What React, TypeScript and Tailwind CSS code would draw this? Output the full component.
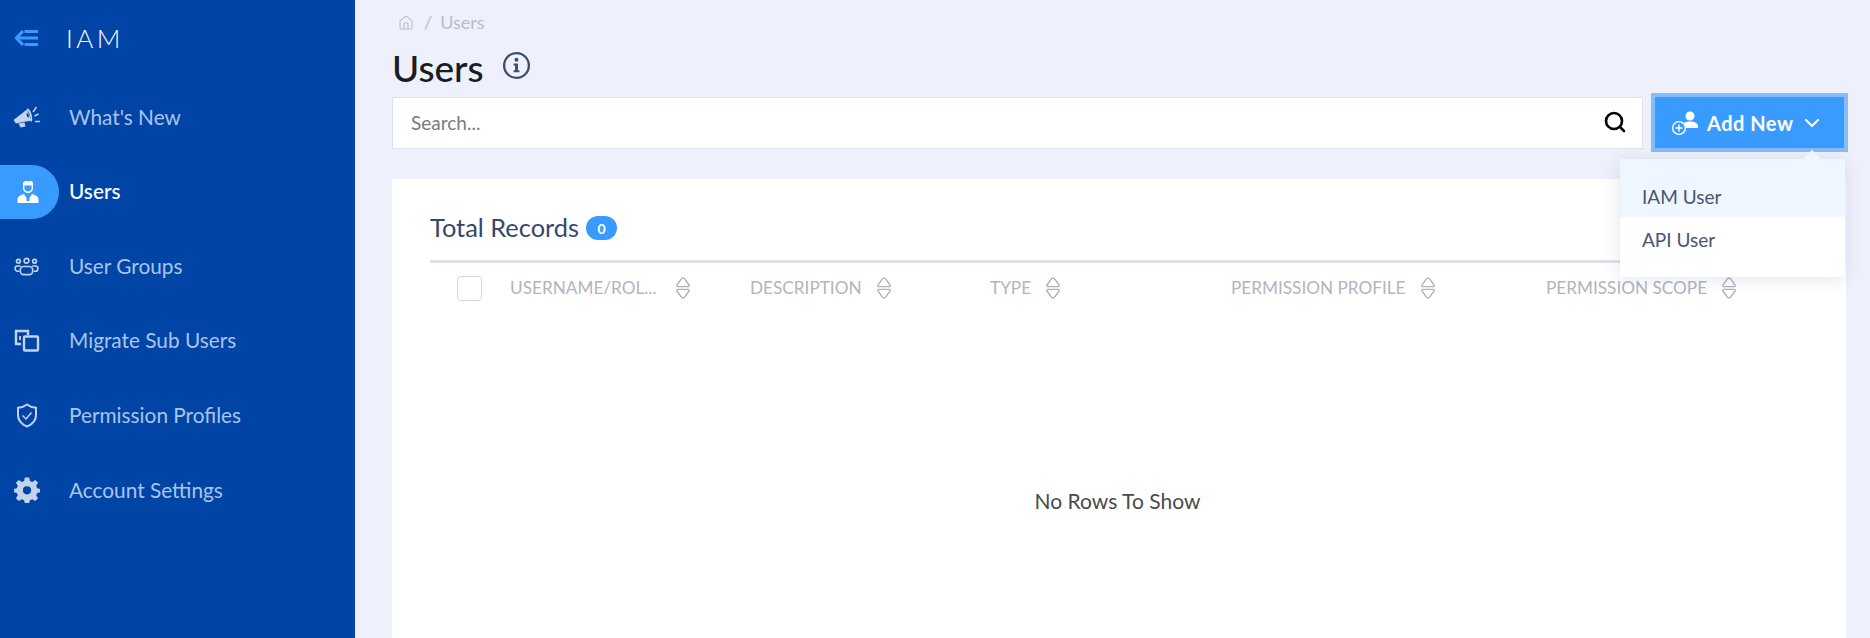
import { ChevronDown, House, Search } from "lucide-react";
import type { ReactNode } from "react";

function Megaphone() {
  return (
    <svg viewBox="0 0 28 22" className="w-[28px] h-[22px]" fill="currentColor">
      <path d="M0.5 14 L14 3.5 L18.5 14.5 L3 17.5 Z" />
      <path d="M14 2.5 C16.5 1.5 20.5 10 19 15.5 L17.5 15.5 C18.5 11 15.5 4.5 14 4 Z" />
      <path d="M14.3 7 C12.8 7.6 13.8 11.5 15.8 11.6 C16.4 10.4 15.4 7.6 14.3 7 Z" fill="#0045a5" />
      <path d="M5.5 17.5 L11.5 16.5 L12.5 20.5 L7.5 21.5 Z" />
      <path d="M20 6 L23.5 1 M21.5 10 L25.5 8 M22 15.5 L27 15.5" fill="none" stroke="currentColor" strokeWidth="1.4" />
    </svg>
  );
}

function UserTie() {
  return (
    <svg viewBox="0 0 22 24" className="w-[22px] h-[24px]" fill="white">
      <path d="M6 4 C6 1 9 0.5 11 1.5 C13 0.5 16 0.5 16 3 L16 8 C16 11 13.5 13 11 13 C8.5 13 6 11 6 8 Z" />
      <path d="M7.4 5.6 L14.6 5.6 L14.6 8 C14.6 10 13 11.6 11 11.6 C9 11.6 7.4 10 7.4 8 Z" fill="#3a9bff" />
      <path d="M0.5 23 L0.5 19.5 C0.5 16.5 3.5 15 7 14 L9.5 18 L9.5 21 L12.5 21 L12.5 18 L15 14 C18.5 15 21.5 16.5 21.5 19.5 L21.5 23 Z" />
    </svg>
  );
}

function Group() {
  return (
    <svg viewBox="0 0 26 20" className="w-[25px] h-[19px]" fill="none" stroke="currentColor" strokeWidth="1.7">
      <circle cx="13" cy="4" r="2.5" />
      <circle cx="4.5" cy="4.5" r="2" />
      <circle cx="21.5" cy="4.5" r="2" />
      <rect x="6.5" y="10" width="13" height="8.5" rx="3.5" />
      <path d="M5.5 15 L3.5 15 C2 15 1 13.5 1 12 C1 10.5 2 9.5 3.5 9.5 L7 9.5" />
      <path d="M20.5 15 L22.5 15 C24 15 25 13.5 25 12 C25 10.5 24 9.5 22.5 9.5 L19 9.5" />
    </svg>
  );
}

function Migrate() {
  return (
    <svg viewBox="0 0 26 24" className="w-[26px] h-[24px]" fill="none" stroke="currentColor" strokeWidth="2.4">
      <path d="M7 15 L2 15 L2 2 L14 2 L14 6" />
      <path d="M6 7 L6 11" strokeWidth="1.8" />
      <rect x="10" y="7.5" width="14" height="14" rx="1" />
    </svg>
  );
}

function Shield() {
  return (
    <svg viewBox="0 0 22 25" className="w-[22px] h-[25px]" fill="none" stroke="currentColor" strokeWidth="2">
      <path d="M11 1.5 C13.5 3.5 16.5 4.5 20 4.8 L20 12 C20 17.5 16 21.5 11 23.5 C6 21.5 2 17.5 2 12 L2 4.8 C5.5 4.5 8.5 3.5 11 1.5 Z" />
      <path d="M6.5 12.5 L10 16 L15.5 9.5" strokeWidth="1.5" />
    </svg>
  );
}

function Gear() {
  return (
    <svg viewBox="0 0 24 24" className="w-[26px] h-[26px]" fill="currentColor">
      <path
        fillRule="evenodd"
        d="M10 0.5 H14 L14.7 3.6 L16.9 4.5 L19.6 2.8 L22.2 5.4 L20.5 8.1 L21.4 10.3 L24 11 V14 L21.4 14.7 L20.5 16.9 L22.2 19.6 L19.6 22.2 L16.9 20.5 L14.7 21.4 L14 24 H10 L9.3 21.4 L7.1 20.5 L4.4 22.2 L1.8 19.6 L3.5 16.9 L2.6 14.7 L0 14 V11 L2.6 10.3 L3.5 8.1 L1.8 5.4 L4.4 2.8 L7.1 4.5 L9.3 3.6 Z M12 8.5 A3.8 3.8 0 1 0 12 16.1 A3.8 3.8 0 1 0 12 8.5 Z"
      />
    </svg>
  );
}

function AddUser() {
  return (
    <svg viewBox="0 0 28 26" className="w-[28px] h-[26px]" fill="white">
      <circle cx="19" cy="6" r="4.5" />
      <path d="M11 18 C11 13.5 14 11.5 19 11.5 C24 11.5 27 13.5 27 16.5 L27 18 Z" />
      <circle cx="8" cy="18" r="6.4" fill="#3a9bff" stroke="white" strokeWidth="1.4" />
      <path d="M8 14.5 V21.5 M4.5 18 H11.5" stroke="white" strokeWidth="1.4" />
    </svg>
  );
}

function SortIcon() {
  return (
    <svg viewBox="0 0 16 22" className="w-[16px] h-[22px] shrink-0" fill="none" stroke="#afb3bc" strokeWidth="1.4" strokeLinejoin="round">
      <path d="M8 1 C9 1 9.5 1.6 10 2.4 L14 8 C14.4 8.8 14 9.6 13 9.6 L3 9.6 C2 9.6 1.6 8.8 2 8 L6 2.4 C6.5 1.6 7 1 8 1 Z" />
      <path d="M8 21 C9 21 9.5 20.4 10 19.6 L14 14 C14.4 13.2 14 12.4 13 12.4 L3 12.4 C2 12.4 1.6 13.2 2 14 L6 19.6 C6.5 20.4 7 21 8 21 Z" />
    </svg>
  );
}

function InfoIcon() {
  return (
    <svg viewBox="0 0 30 30" className="w-[29px] h-[29px]" fill="none">
      <circle cx="15" cy="15" r="12.8" stroke="#3d4c72" strokeWidth="2.4" />
      <circle cx="15" cy="9" r="2" fill="#3d4c72" />
      <path d="M12 13 H16.5 V20 H18 V22 H12 V20 H13.5 V15 H12 Z" fill="#3d4c72" />
    </svg>
  );
}

const navItems: { label: string; icon: ReactNode; active?: boolean }[] = [
  { label: "What's New", icon: <Megaphone /> },
  { label: "Users", icon: <UserTie />, active: true },
  { label: "User Groups", icon: <Group /> },
  { label: "Migrate Sub Users", icon: <Migrate /> },
  { label: "Permission Profiles", icon: <Shield /> },
  { label: "Account Settings", icon: <Gear /> },
];

const columns = [
  { label: "USERNAME/ROL...", width: "w-[240px]", labelWidth: "w-[151px]" },
  { label: "DESCRIPTION", width: "w-[240px]", labelWidth: "" },
  { label: "TYPE", width: "w-[241px]", labelWidth: "" },
  { label: "PERMISSION PROFILE", width: "w-[315px]", labelWidth: "" },
  { label: "PERMISSION SCOPE", width: "w-[200px]", labelWidth: "" },
];

function Sidebar() {
  return (
    <aside className="w-[355px] shrink-0 h-full bg-[#0045a5] flex flex-col">
      <div className="h-[75px] flex items-center pl-[14px] shrink-0">
        <svg viewBox="0 0 24 18" className="w-[24px] h-[18px]" fill="none" stroke="#3a9bff" strokeWidth="3.2">
          <path d="M9 2 L2.5 9 L9 16" />
          <path d="M3 9 H24 M10.5 2.5 H24 M10.5 15.5 H24" />
        </svg>
        <span className="ml-[28px] text-[26px] font-light text-white tracking-[3.5px] leading-none">IAM</span>
      </div>
      <nav className="flex flex-col pt-[5px]">
        {navItems.map((item) => (
          <div key={item.label} className="h-[74.6px] flex items-center">
            <div
              className={`w-[59px] h-[54px] flex items-center justify-center rounded-r-[27px] shrink-0 ${
                item.active ? "bg-[#3a9bff] pr-[4px]" : "text-[#c3d3ee] pr-[6px]"
              }`}
            >
              {item.icon}
            </div>
            <span className={`ml-[10px] pb-[2px] text-[20.8px] ${item.active ? "text-white font-medium" : "text-[#a9c4ec]"}`}>
              {item.label}
            </span>
          </div>
        ))}
      </nav>
    </aside>
  );
}

function AddNewMenu() {
  return (
    <div className="absolute z-10 right-[3px] top-[66px] w-[225px] bg-white shadow-[0_2px_16px_rgba(60,70,110,0.14)]">
      <div className="absolute -top-[9px] right-[24px] w-0 h-0 border-x-[9px] border-x-transparent border-b-[9px] border-b-[#eef6ff]" />
      <div className="h-[58px] pt-[19px] flex items-center px-[22px] bg-[#eef6ff] text-[19px] text-[#4b5572]">IAM User</div>
      <div className="h-[60px] pb-[14px] flex items-center px-[22px] text-[19px] text-[#4b5572]">API User</div>
    </div>
  );
}

function Toolbar() {
  return (
    <div className="relative flex items-center gap-[8px] mt-[5px]">
      <div className="flex-1 h-[52px] bg-white border border-[#dfe2ea] flex items-center pl-[18px] pr-[15px]">
        <span className="flex-1 pt-[2px] text-[19px] text-[#7a7a7a]">Search...</span>
        <Search className="w-[24px] h-[24px] -mt-[2px] text-black" strokeWidth={2.6} />
      </div>
      <div className="w-[197px] h-[59px] bg-[#3a9bff] border-[4px] border-[#84bdfa] flex items-center pl-[16px] text-white shrink-0">
        <AddUser />
        <span className="ml-[8px] text-[20px] font-bold tracking-[0.5px]">Add New</span>
        <ChevronDown className="ml-[7px] w-[24px] h-[24px]" strokeWidth={2} />
      </div>
      <AddNewMenu />
    </div>
  );
}

function RecordsCard() {
  return (
    <section className="flex-1 mt-[27px] mr-[2px] bg-white pt-[30px] pl-[38px] pr-[38px] flex flex-col min-h-0">
      <div className="flex items-center h-[38px]">
        <h2 className="text-[25.4px] text-[#37476b] leading-none">Total Records</h2>
        <span className="ml-[7px] w-[31px] h-[24px] rounded-full bg-[#3a9bff] text-white text-[14px] font-bold flex items-center justify-center">
          0
        </span>
      </div>
      <div className="mt-[13px] h-[3px] bg-[#dfe1e9]" />
      <div className="flex items-center h-[50px] pl-[27px]">
        <div className="w-[25px] h-[25px] border border-[#d5d7dd] rounded-[4px] shrink-0 mr-[28px]" />
        {columns.map((col) => (
          <div key={col.label} className={`${col.width} flex items-center gap-[14px] shrink-0`}>
            <span className={`${col.labelWidth} text-[17.2px] text-[#b0b5bf] whitespace-nowrap`}>{col.label}</span>
            <SortIcon />
          </div>
        ))}
      </div>
      <div className="mt-[172px] text-center text-[21px] text-[#4a4a4a] pr-[3px]">No Rows To Show</div>
    </section>
  );
}

export default function App() {
  return (
    <div className="w-[1870px] h-[638px] flex overflow-hidden bg-[#eef1fb] font-['Lato','Open_Sans',sans-serif]">
      <Sidebar />
      <main className="flex-1 min-w-0 pl-[37px] pr-[22px] flex flex-col">
        <div className="flex items-center h-[33px] pt-[12px] pl-[6px] text-[18px] text-[#b9bdc9]">
          <House className="w-[16px] h-[16px]" strokeWidth={1.6} />
          <span className="ml-[10px]">/</span>
          <span className="ml-[8px]">Users</span>
        </div>
        <div className="flex items-center h-[55px] pt-[14px]">
          <h1 className="text-[37px] font-medium text-[#1b1b22] leading-none">Users</h1>
          <span className="ml-[18px] -mt-[4px]">
            <InfoIcon />
          </span>
        </div>
        <Toolbar />
        <RecordsCard />
      </main>
    </div>
  );
}
